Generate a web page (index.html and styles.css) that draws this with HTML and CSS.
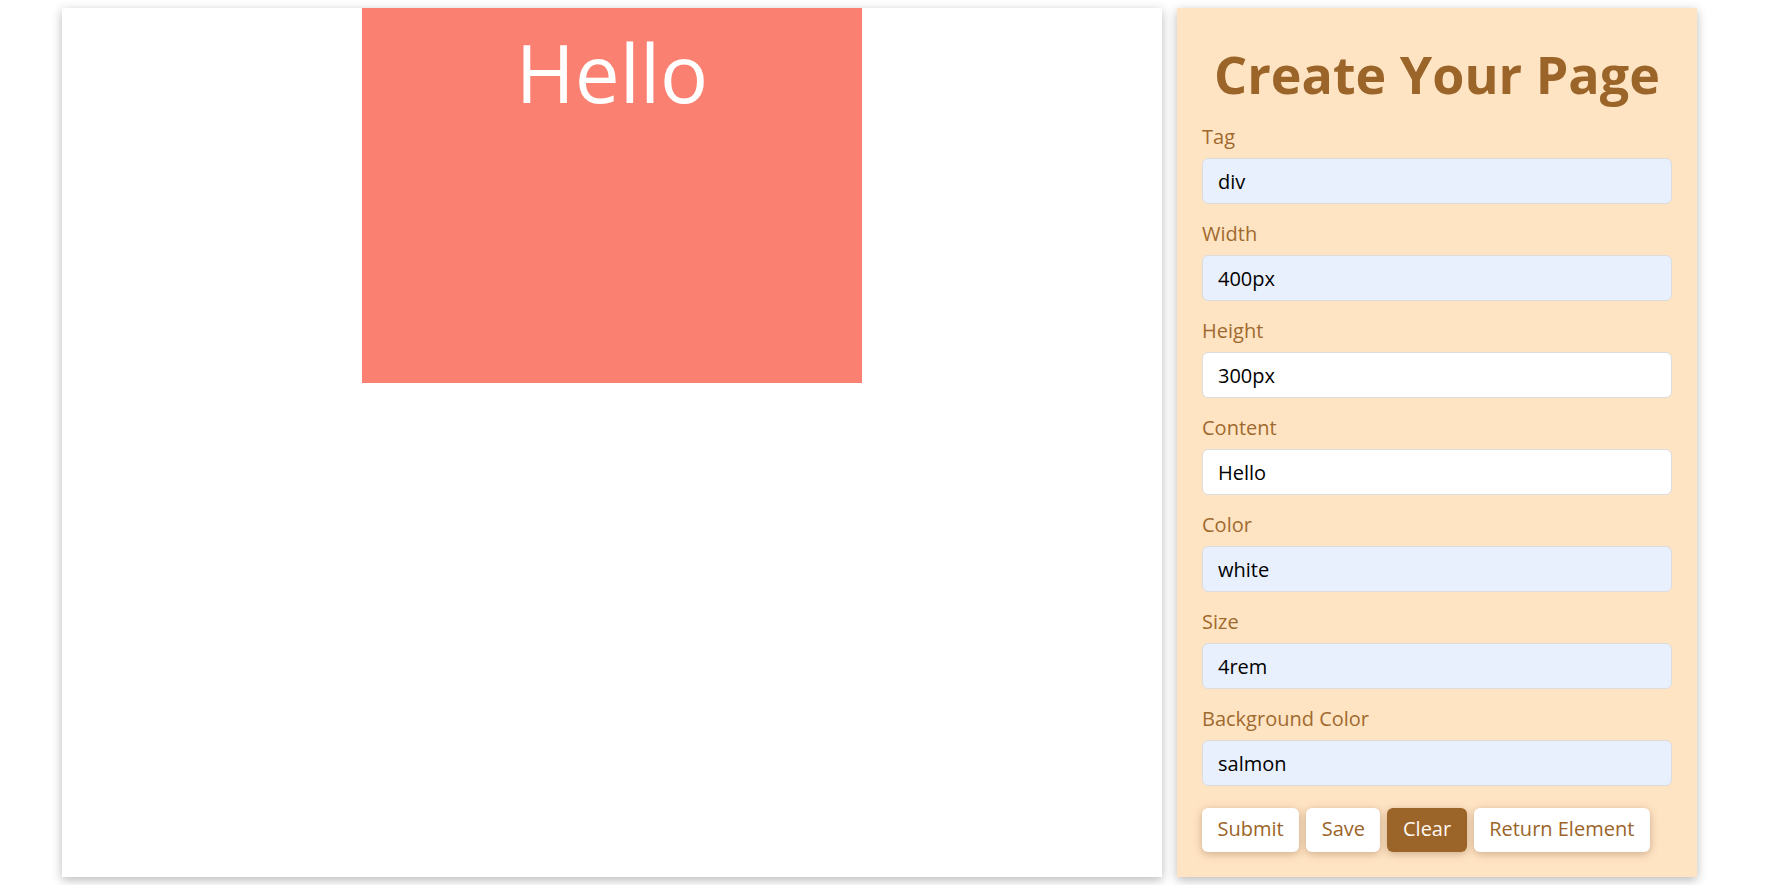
FILE: index.html
```html
<!DOCTYPE html>
<html lang="en">
<head>
<meta charset="utf-8">
<title>Create Your Page</title>
<link rel="stylesheet" href="styles.css">
</head>
<body>
<div class="page">
  <main class="canvas">
    <div class="preview" style="width:500px;height:375px;background-color:salmon;color:white;font-size:80px;">Hello</div>
  </main>
  <aside class="panel">
    <h1 class="title">Create Your Page</h1>
    <form class="form">
      <div class="field">
        <label class="label" for="tag">Tag</label>
        <input class="input autofilled" id="tag" type="text" value="div">
      </div>
      <div class="field">
        <label class="label" for="width">Width</label>
        <input class="input autofilled" id="width" type="text" value="400px">
      </div>
      <div class="field">
        <label class="label" for="height">Height</label>
        <input class="input" id="height" type="text" value="300px">
      </div>
      <div class="field">
        <label class="label" for="content">Content</label>
        <input class="input" id="content" type="text" value="Hello">
      </div>
      <div class="field">
        <label class="label" for="color">Color</label>
        <input class="input autofilled" id="color" type="text" value="white">
      </div>
      <div class="field">
        <label class="label" for="size">Size</label>
        <input class="input autofilled" id="size" type="text" value="4rem">
      </div>
      <div class="field field-last">
        <label class="label" for="bg">Background Color</label>
        <input class="input autofilled" id="bg" type="text" value="salmon">
      </div>
      <div class="actions">
        <button class="btn" type="button">Submit</button>
        <button class="btn" type="button">Save</button>
        <button class="btn btn-primary" type="button">Clear</button>
        <button class="btn" type="button">Return Element</button>
      </div>
    </form>
  </aside>
</div>
</body>
</html>
```

FILE: styles.css
```css
* {
  box-sizing: border-box;
}

html, body {
  margin: 0;
  padding: 0;
  background: #ffffff;
}

body {
  font-family: "Open Sans", "Liberation Sans", sans-serif;
  color: #9b6428;
}

.page {
  display: flex;
  align-items: stretch;
  gap: 15px;
  padding: 8px 80px 8px 62px;
}

.canvas {
  width: 1100px;
  flex: 0 0 1100px;
  background: #ffffff;
  box-shadow: 0 3px 10px rgba(0, 0, 0, 0.28);
  display: flex;
  justify-content: center;
  align-items: flex-start;
}

.preview {
  text-align: center;
  line-height: 109px;
  padding-top: 9px;
}

.panel {
  width: 520px;
  flex: 0 0 520px;
  background: #ffe4c4;
  box-shadow: 0 3px 10px rgba(0, 0, 0, 0.28);
  padding: 30px 25px 25px;
}

.title {
  margin: 0 0 14px;
  font-size: 52px;
  line-height: 71px;
  font-weight: 700;
  text-align: center;
  color: #9b6428;
}

.form {
  display: flex;
  flex-direction: column;
}

.field {
  display: flex;
  flex-direction: column;
  margin-bottom: 16px;
}

.field-last {
  margin-bottom: 22px;
}

.label {
  font-size: 20px;
  line-height: 27px;
  margin-bottom: 8px;
  color: #a06a2e;
}

.input {
  width: 100%;
  height: 46px;
  border: 1px solid #dcdcdc;
  border-radius: 6px;
  padding: 0 15px;
  font-family: "Open Sans", "Liberation Sans", sans-serif;
  font-size: 20px;
  color: #000000;
  background: #ffffff;
  outline: none;
}

.input.autofilled {
  background: #e8f0fe;
}

.actions {
  display: flex;
  gap: 7px;
}

.btn {
  height: 44px;
  padding: 7px 15.5px 9px;
  border: none;
  border-radius: 6px;
  background: #ffffff;
  color: #9b6428;
  font-family: "Open Sans", "Liberation Sans", sans-serif;
  font-size: 20px;
  line-height: 28px;
  box-shadow: 0 2px 8px rgba(110, 70, 30, 0.35);
  cursor: pointer;
}

.btn-primary {
  background: #9b6428;
  color: #fff8f0;
}
```
